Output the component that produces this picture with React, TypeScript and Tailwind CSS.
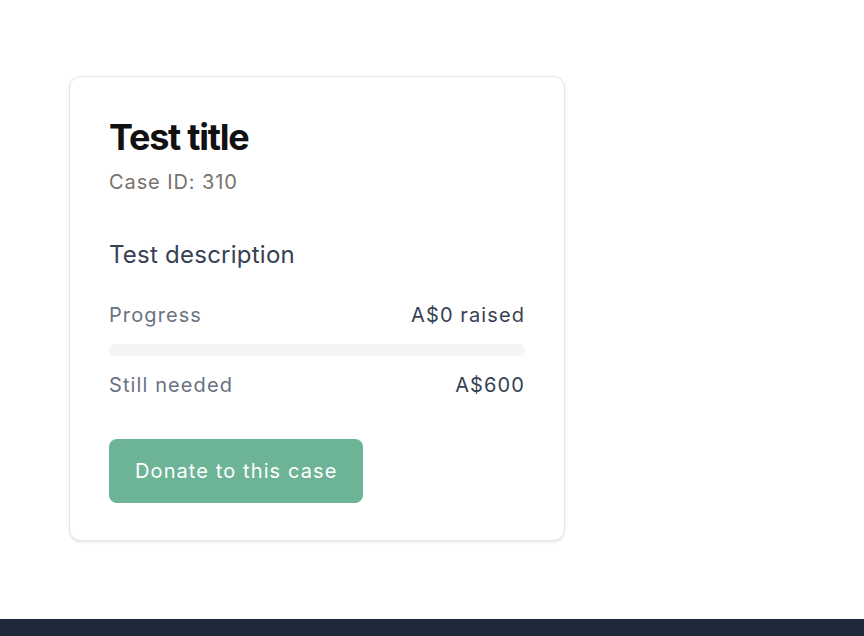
const App = () => {
  return (
    <div className="min-h-screen flex flex-col bg-white font-['Inter',sans-serif]">
      <main className="flex-1 pt-[76px] pl-[69px]">
        <div className="w-[496px] rounded-xl border border-gray-200 bg-white px-[39px] pt-10 pb-[37px] shadow-sm">
          <h1 className="text-4xl font-bold tracking-[-0.035em] text-[#111111]">
            Test title
          </h1>
          <p className="mt-[11px] text-xl tracking-[0.045em] text-stone-500">
            Case ID: 310
          </p>
          <p className="mt-[43px] text-2xl tracking-[0.01em] text-gray-700">
            Test description
          </p>
          <div className="mt-[30px] flex justify-between text-xl tracking-[0.055em]">
            <span className="text-gray-500">Progress</span>
            <span className="text-gray-700">A$0 raised</span>
          </div>
          <div className="mt-[15px] h-3 w-full rounded-full bg-gray-100" />
          <div className="mt-[15px] flex justify-between text-xl tracking-[0.055em]">
            <span className="text-gray-500">Still needed</span>
            <span className="text-gray-700">A$600</span>
          </div>
          <button className="mt-10 h-16 rounded-lg bg-[#6db396] px-[26px] text-xl tracking-[0.055em] text-white">
            Donate to this case
          </button>
        </div>
      </main>
      <footer className="mt-[76px] h-[17px] bg-gray-800" />
    </div>
  );
};

export default App;
